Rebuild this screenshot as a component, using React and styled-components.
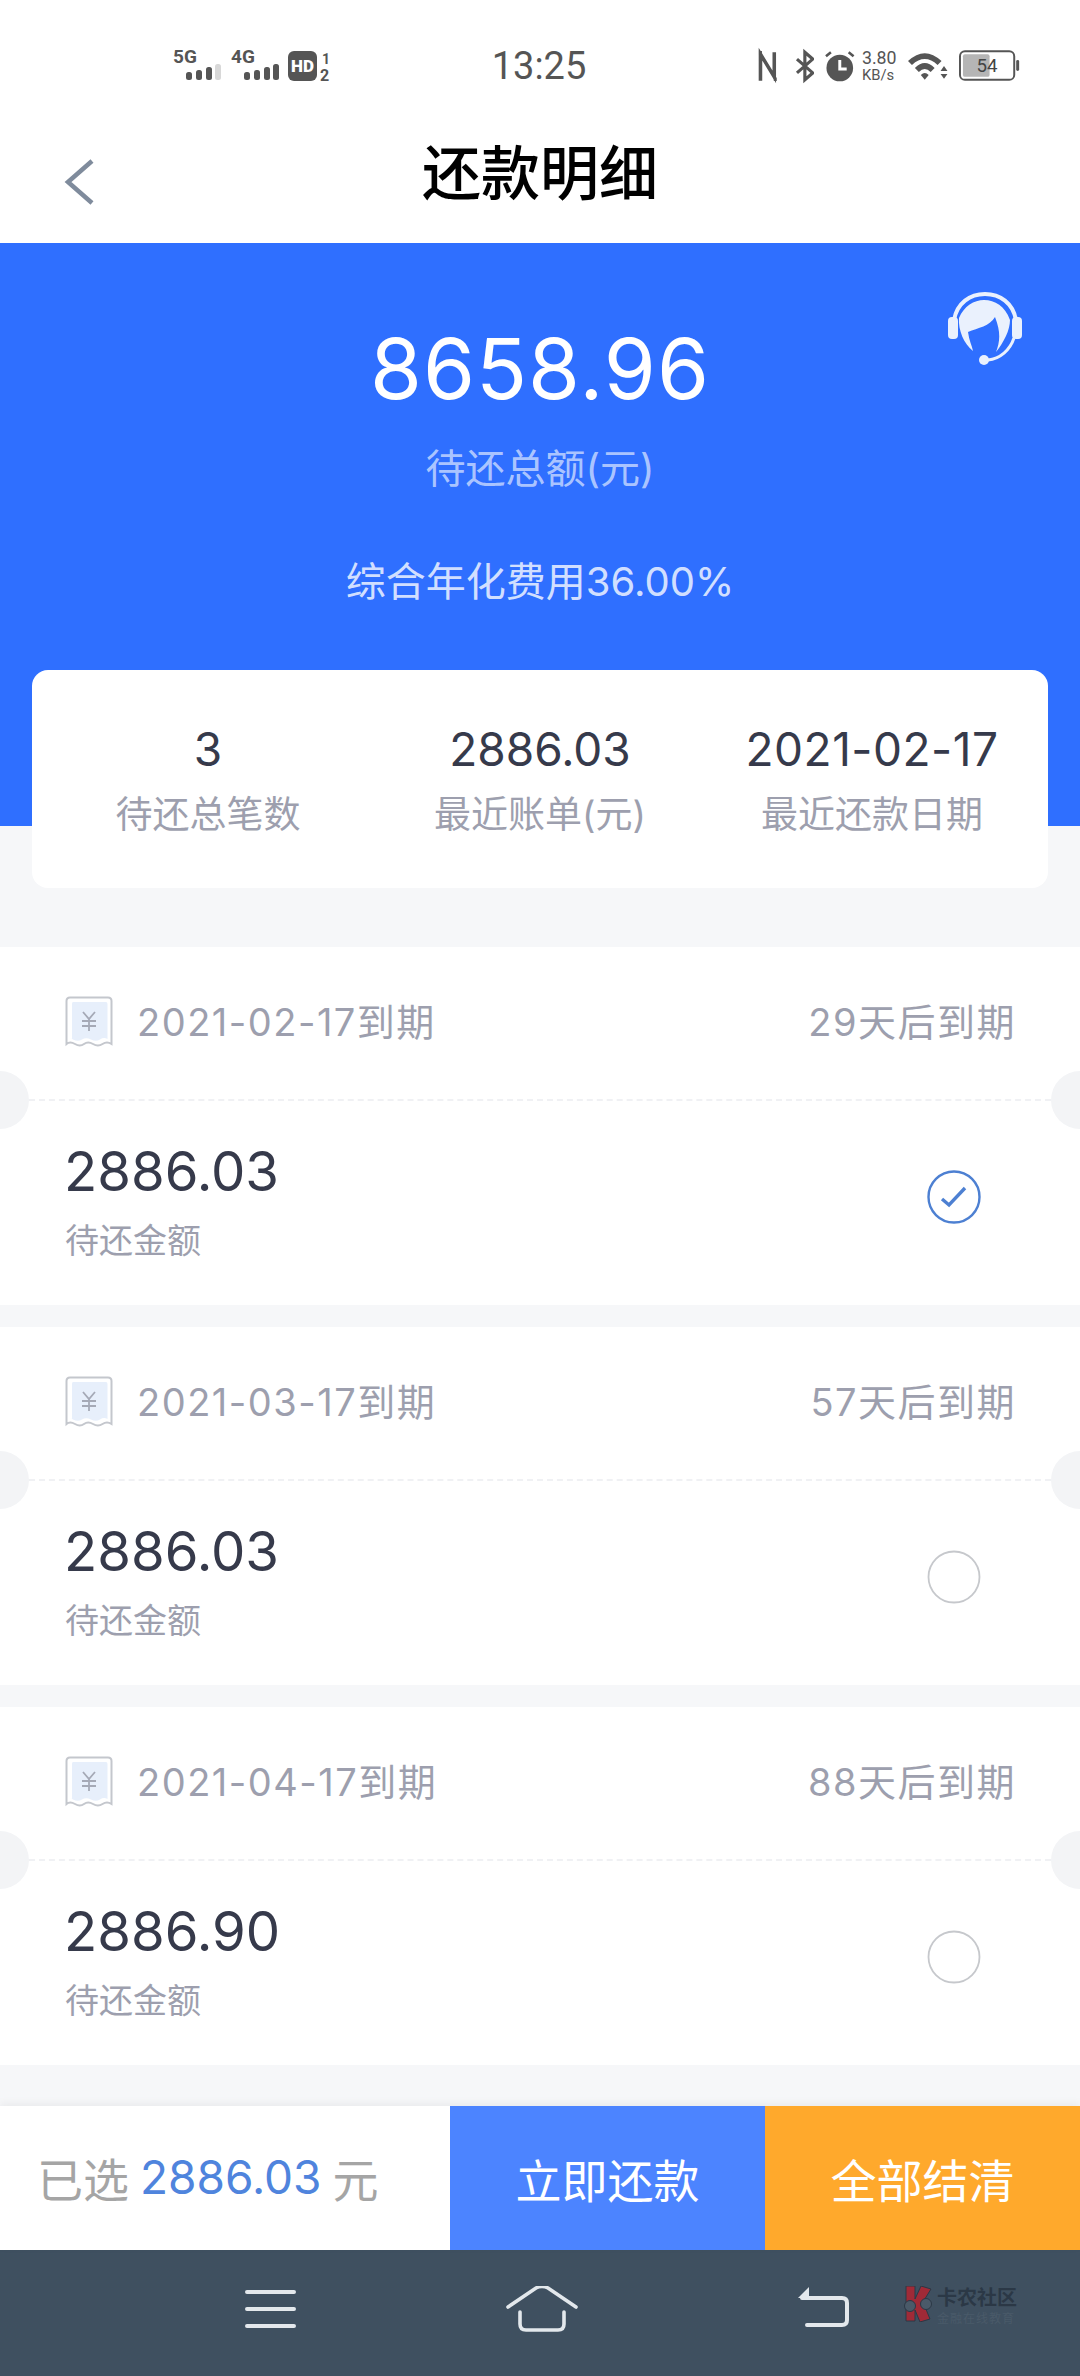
import React from "react";
import styled, { createGlobalStyle } from "styled-components";

const Global = createGlobalStyle`
  html, body { margin: 0; padding: 0; background: #fff; }
  * { box-sizing: border-box; }
`;
const FONT = `Inter, "Noto Sans CJK SC", sans-serif`;

const Page = styled.div`
  width: 1080px; height: 2376px; overflow: hidden; display: flex; flex-direction: column;
  background: #f6f7f9; font-family: ${FONT};
`;
const StatusBar = styled.div`
  height: 104px; padding: 46px 0 0 173px; background: #fff; display: flex; align-items: flex-start;
`;
const StatusLeft = styled.div`
  width: 318px; display: flex; align-items: flex-start;
`;
const Time = styled.div`
  width: 96px; height: 40px; line-height: 40px; font-size: 38px; color: #555; font-family: Roboto, sans-serif; text-align: center;
`;
const StatusRight = styled.div`
  margin-left: 171px; width: 262px; display: flex; align-items: flex-start;
`;
const Header = styled.div`
  height: 139px; background: #fff; display: flex; align-items: center; justify-content: center; position: relative;
`;
const BackBtn = styled.svg`
  position: absolute; left: 64px; top: 54px;
`;
const Title = styled.h1`
  margin: 0; font-size: 59px; font-weight: 500; color: #000; line-height: 1;
`;
const Hero = styled.div`
  height: 583px; background: #2f6fff; display: flex; flex-direction: column; align-items: center; position: relative; color: #fff;
`;
const HeroAmount = styled.div`
  margin-top: 74px; font-size: 84px; line-height: 104px; font-weight: 400; letter-spacing: 1px;
`;
const HeroLabel = styled.div`
  margin-top: 23px; font-size: 40px; line-height: 50px; color: rgba(255,255,255,.62);
`;
const HeroRate = styled.div`
  margin-top: 63px; font-size: 40px; line-height: 50px; color: rgba(255,255,255,.8);
`;
const Agent = styled.svg`
  position: absolute; right: 58px; top: 49px;
`;
const Summary = styled.div`
  margin: -156px 32px 0; height: 218px; border-radius: 16px; background: #fff; position: relative;
  display: grid; grid-template-columns: 352px 312px 352px; padding-top: 52px; flex: none;
`;
const Stat = styled.div`
  display: flex; flex-direction: column; align-items: center;
`;
const StatValue = styled.div`
  font-size: 46px; line-height: 54px; color: #363a4b; white-space: nowrap; letter-spacing: ${p => p.$ls || 0}px;
`;
const StatLabel = styled.div`
  margin-top: 17px; font-size: 37px; line-height: 44px; color: #9d9fae;
`;
const List = styled.div`
  margin-top: 59px; display: flex; flex-direction: column; gap: 22px; flex: 1; min-height: 0;
`;
const Bill = styled.div`
  height: 358px; background: #fff; position: relative; overflow: hidden; flex: none;
`;
const Notch = styled.span`
  position: absolute; top: 124px; ${p => p.$side}: -29px; width: 58px; height: 58px; border-radius: 50%; background: #f3f4f6;
`;
const BillTop = styled.div`
  height: 154px; margin: 0 29px; padding: 0 35px 6px 36px; display: flex; align-items: center; border-bottom: 2px dashed #f0f1f4;
`;
const TicketWrap = styled.div`
  margin-top: 4px; display: flex;
`;
const BillDate = styled.div`
  margin: -2px 0 0 24px; font-size: 38px; letter-spacing: 1.5px; color: #9d9fae; flex: 1;
`;
const BillDue = styled.div`
  margin-top: -2px; font-size: 38px; letter-spacing: 1.5px; color: #9d9fae;
`;
const BillBody = styled.div`
  padding: 36px 99px 0 64px; display: flex; align-items: center; justify-content: space-between;
`;
const RadioWrap = styled.div`
  margin-bottom: 6px; display: flex;
`;
const Amount = styled.div`
  font-size: 54.500px; line-height: 68px; color: #363a4b;
`;
const AmountLabel = styled.div`
  margin: 14px 0 0 1px; font-size: 34px; line-height: 44px; color: #9d9fae;
`;
const Bottom = styled.div`
  height: 144px; flex: none; display: flex; background: #fff; box-shadow: 0 -3px 8px rgba(0,0,0,.05); position: relative;
`;
const Picked = styled.div`
  width: 450px; padding: 0 0 2px 37px; display: flex; align-items: center; gap: 11px; font-size: 46px; color: #a5a5a5; white-space: nowrap;
`;
const PickedSum = styled.span`
  color: #4f84dd;
`;
const Action = styled.div`
  width: ${p => p.$w}px; background: ${p => p.$bg}; color: #fff; display: flex; align-items: center; justify-content: center; font-size: 46px;
`;
const Nav = styled.div`
  height: 126px; flex: none; background: #3f5060; padding: 36px 0 0 243px; display: flex; align-items: flex-start;
`;
const NavIcon = styled.svg`
  flex: none; margin-left: ${p => p.$ml || 0}px;
`;
const Watermark = styled.div`
  margin-left: 52px; width: 120px; display: flex; gap: 3px; align-items: flex-start;
`;
const WmText = styled.div`
  color: #2b3846; font-size: 20px; line-height: 24px; font-weight: 700; white-space: nowrap;
`;
const WmSub = styled.div`
  margin-top: 2px; color: #4a5a69; font-size: 12px; line-height: 14px; font-weight: 400; letter-spacing: 1px; white-space: nowrap;
`;

const Ticket = () => (
  <svg width="48" height="52" viewBox="0 0 48 52">
    <path d="M5 1.500H43Q46.500 1.500 46.500 5V48Q42 45 37.500 48T28 48 19 48 10 48 1.500 48V5Q1.500 1.500 5 1.500Z" fill="#fff" stroke="#c4c7cd" strokeWidth="2" />
    <path d="M8 6H41Q42.500 6 42.500 8V43Q39 41 35 43.500T26 43.500 17 43.500 8 43.500 7 43V8Q7 6 8 6Z" fill="#e7effb" />
    <path d="M18 16L24 23L30 16M24 23V35M17 25H31M17 30H31" fill="none" stroke="#a5a9b6" strokeWidth="1.800" />
  </svg>
);
const Radio = ({ on }) => (
  <svg width="54" height="54" viewBox="0 0 54 54">
    <circle cx="27" cy="27" r="25.500" fill="none" stroke={on ? "#4d80d2" : "#c6c8cc"} strokeWidth={on ? 2.400 : 1.800} />
    {on && <path d="M15 29L22 35L38 18" fill="none" stroke="#4d80d2" strokeWidth="3.400" />}
  </svg>
);
const SigBars = ({ dim }) => (
  <g fill="#555">
    <rect x="0" y="8" width="6" height="8" rx="2.500" />
    <rect x="10" y="6" width="6" height="10" rx="2.500" />
    <rect x="20" y="3" width="6" height="13" rx="2.500" />
    <rect x="29" y="0" width="6" height="16" rx="2.500" fill={dim ? "#d8d8d8" : "#555"} />
  </g>
);
const Signal = ({ label, dim, ml }) => (
  <svg width="50" height="40" viewBox="0 -4 50 40" style={{ marginLeft: ml }}>
    <text x="0" y="13" fontFamily="Roboto, sans-serif" fontWeight="700" fontSize="19" fill="#555">{label}</text>
    <g transform="translate(13 14)"><SigBars dim={dim} /></g>
  </svg>
);
const bills = [
  ["2021-02-17到期", "29天后到期", "2886.03", true],
  ["2021-03-17到期", "57天后到期", "2886.03", false],
  ["2021-04-17到期", "88天后到期", "2886.90", false],
];

export default function App() {
  return (
    <Page>
      <Global />
      <StatusBar>
        <StatusLeft>
          <Signal label="5G" dim />
          <Signal label="4G" ml={8} />
          <svg width="42" height="40" viewBox="0 -4 42 40" style={{ marginLeft: 7 }}>
            <rect x="0" y="1" width="29" height="30" rx="6" fill="#555" />
            <text x="14.500" y="22" textAnchor="middle" fontFamily="Roboto, sans-serif" fontWeight="900" fontSize="17" fill="#fff">HD</text>
            <text x="34" y="14" fontFamily="Roboto, sans-serif" fontWeight="700" fontSize="14" fill="#555">1</text>
            <text x="32" y="31" fontFamily="Roboto, sans-serif" fontWeight="700" fontSize="16" fill="#555">2</text>
          </svg>
        </StatusLeft>
        <Time>13:25</Time>
        <StatusRight>
          <svg width="20" height="40" viewBox="0 -4 20 40" fill="none" stroke="#555" strokeWidth="3.600">
            <path d="M2.500 31V4L16.500 27V2" />
            <path d="M1 2.500H4M16 29.500H19" />
          </svg>
          <svg width="20" height="40" viewBox="0 -4 20 40" fill="none" stroke="#555" strokeWidth="3.200" style={{ marginLeft: 17 }}>
            <path d="M2 9L18 23L10 30V2L18 9L2 23" />
          </svg>
          <svg width="32" height="40" viewBox="0 -4 32 40" style={{ marginLeft: 10 }}>
            <circle cx="16" cy="18" r="13.500" fill="#555" />
            <path d="M16 10V19H23" fill="none" stroke="#fff" strokeWidth="3" />
            <path d="M2 6L7 2M30 6L25 2" stroke="#555" strokeWidth="2.600" />
          </svg>
          <svg width="44" height="40" viewBox="0 -4 44 40" style={{ marginLeft: 4 }}>
            <text x="2" y="14" fontFamily="Roboto, sans-serif" fontSize="18" fill="#555">3.80</text>
            <text x="2" y="30" fontFamily="Roboto, sans-serif" fontSize="15" fill="#555">KB/s</text>
          </svg>
          <svg width="40" height="40" viewBox="0 -4 40 40" style={{ marginLeft: 5 }}>
            <path d="M0 11Q17 -5 34 11L30 15Q17 3 4 15Z" fill="#555" />
            <path d="M7 18Q17 8 27 18L23 22Q17 16 11 22Z" fill="#555" />
            <path d="M13 25Q17 21 21 25L17 30Z" fill="#555" />
            <path d="M33 21L36.500 16L40 21ZM33 24H40L36.500 29Z" fill="#555" />
          </svg>
          <svg width="62" height="40" viewBox="0 -4 62 40" style={{ marginLeft: 11 }}>
            <rect x="1" y="1" width="55" height="29" rx="5" fill="none" stroke="#555" strokeWidth="2" />
            <rect x="4" y="4" width="27" height="23" rx="2" fill="#b5b5b5" />
            <rect x="58" y="10" width="3" height="11" rx="1.500" fill="#555" />
            <text x="28.500" y="22" textAnchor="middle" fontFamily="Roboto, sans-serif" fontSize="19" fill="#444">54</text>
          </svg>
        </StatusRight>
      </StatusBar>
      <Header>
        <BackBtn width="32" height="48" viewBox="0 0 32 48" fill="none" stroke="#7f8b9c" strokeWidth="4.500">
          <path d="M28 3L4 24L28 45" />
        </BackBtn>
        <Title>还款明细</Title>
      </Header>
      <Hero>
        <Agent width="74" height="73" viewBox="0 0 74 73">
          <rect x="0" y="25" width="10" height="22" rx="4" fill="#eaf1fd" />
          <rect x="64" y="25" width="10" height="22" rx="4" fill="#eaf1fd" />
          <path d="M6 28C9 11 22 2 37 2S65 11 68 28" fill="none" stroke="#eaf1fd" strokeWidth="4" />
          <path d="M11 26C16 14 26 8 36 8C47 8 57 14 62 28C62 38 56 50 48 60C52 50 53 40 47 25C42 34 30 36 20 40C21 48 24 54 25 59C16 52 10 38 11 26Z" fill="#eaf1fd" />
          <path d="M66 46C62 58 52 67 40 68" fill="none" stroke="#eaf1fd" strokeWidth="3" />
          <circle cx="36" cy="68" r="5" fill="#eaf1fd" />
        </Agent>
        <HeroAmount>8658.96</HeroAmount>
        <HeroLabel>待还总额(元)</HeroLabel>
        <HeroRate>综合年化费用36.00%</HeroRate>
      </Hero>
      <Summary>
        <Stat><StatValue>3</StatValue><StatLabel>待还总笔数</StatLabel></Stat>
        <Stat><StatValue>2886.03</StatValue><StatLabel>最近账单(元)</StatLabel></Stat>
        <Stat><StatValue $ls={0.5}>2021-02-17</StatValue><StatLabel>最近还款日期</StatLabel></Stat>
      </Summary>
      <List>
        {bills.map(([date, due, amount, on]) => (
          <Bill key={date}>
            <Notch $side="left" />
            <Notch $side="right" />
            <BillTop>
              <TicketWrap><Ticket /></TicketWrap>
              <BillDate>{date}</BillDate>
              <BillDue>{due}</BillDue>
            </BillTop>
            <BillBody>
              <div>
                <Amount>{amount}</Amount>
                <AmountLabel>待还金额</AmountLabel>
              </div>
              <RadioWrap><Radio on={on} /></RadioWrap>
            </BillBody>
          </Bill>
        ))}
      </List>
      <Bottom>
        <Picked>已选 <PickedSum>2886.03</PickedSum> 元</Picked>
        <Action $w={315} $bg="#4c84ff">立即还款</Action>
        <Action $w={315} $bg="#ffa92c">全部结清</Action>
      </Bottom>
      <Nav>
        <NavIcon width="54" height="44" viewBox="0 0 54 44" stroke="#e3e8ec" strokeWidth="4" strokeLinecap="round">
          <path d="M4 6H51M4 23H51M4 40H51" />
        </NavIcon>
        <NavIcon $ml={209} width="72" height="46" viewBox="0 0 72 46" fill="none" stroke="#e3e8ec" strokeWidth="3.600" strokeLinecap="round">
          <path d="M2 21L30 2Q36 -1 42 2L70 21" />
          <path d="M14 26V38Q14 44 20 44H52Q58 44 58 38V26" />
        </NavIcon>
        <NavIcon $ml={218} width="54" height="42" viewBox="0 0 54 42" fill="none">
          <path d="M2 12L13 1V12Z" fill="#e3e8ec" />
          <path d="M6 12H46Q51 12 51 17V34Q51 39 46 39H11" stroke="#e3e8ec" strokeWidth="4" strokeLinecap="round" />
        </NavIcon>
        <Watermark>
          <svg width="32" height="36" viewBox="0 0 32 36" style={{ flex: "none" }}>
            <path d="M4 0H13V13L19 0L29 3L21 16L28 33L18 36L13 24V35H4Z" fill="#a02a37" stroke="#2b3846" />
            <circle cx="8" cy="20" r="5.500" fill="#4a5a69" stroke="#2b3846" />
            <circle cx="24" cy="18" r="5.500" fill="#4a5a69" stroke="#2b3846" />
          </svg>
          <div>
            <WmText>卡农社区</WmText>
            <WmSub>金融在线教育</WmSub>
          </div>
        </Watermark>
      </Nav>
    </Page>
  );
}
